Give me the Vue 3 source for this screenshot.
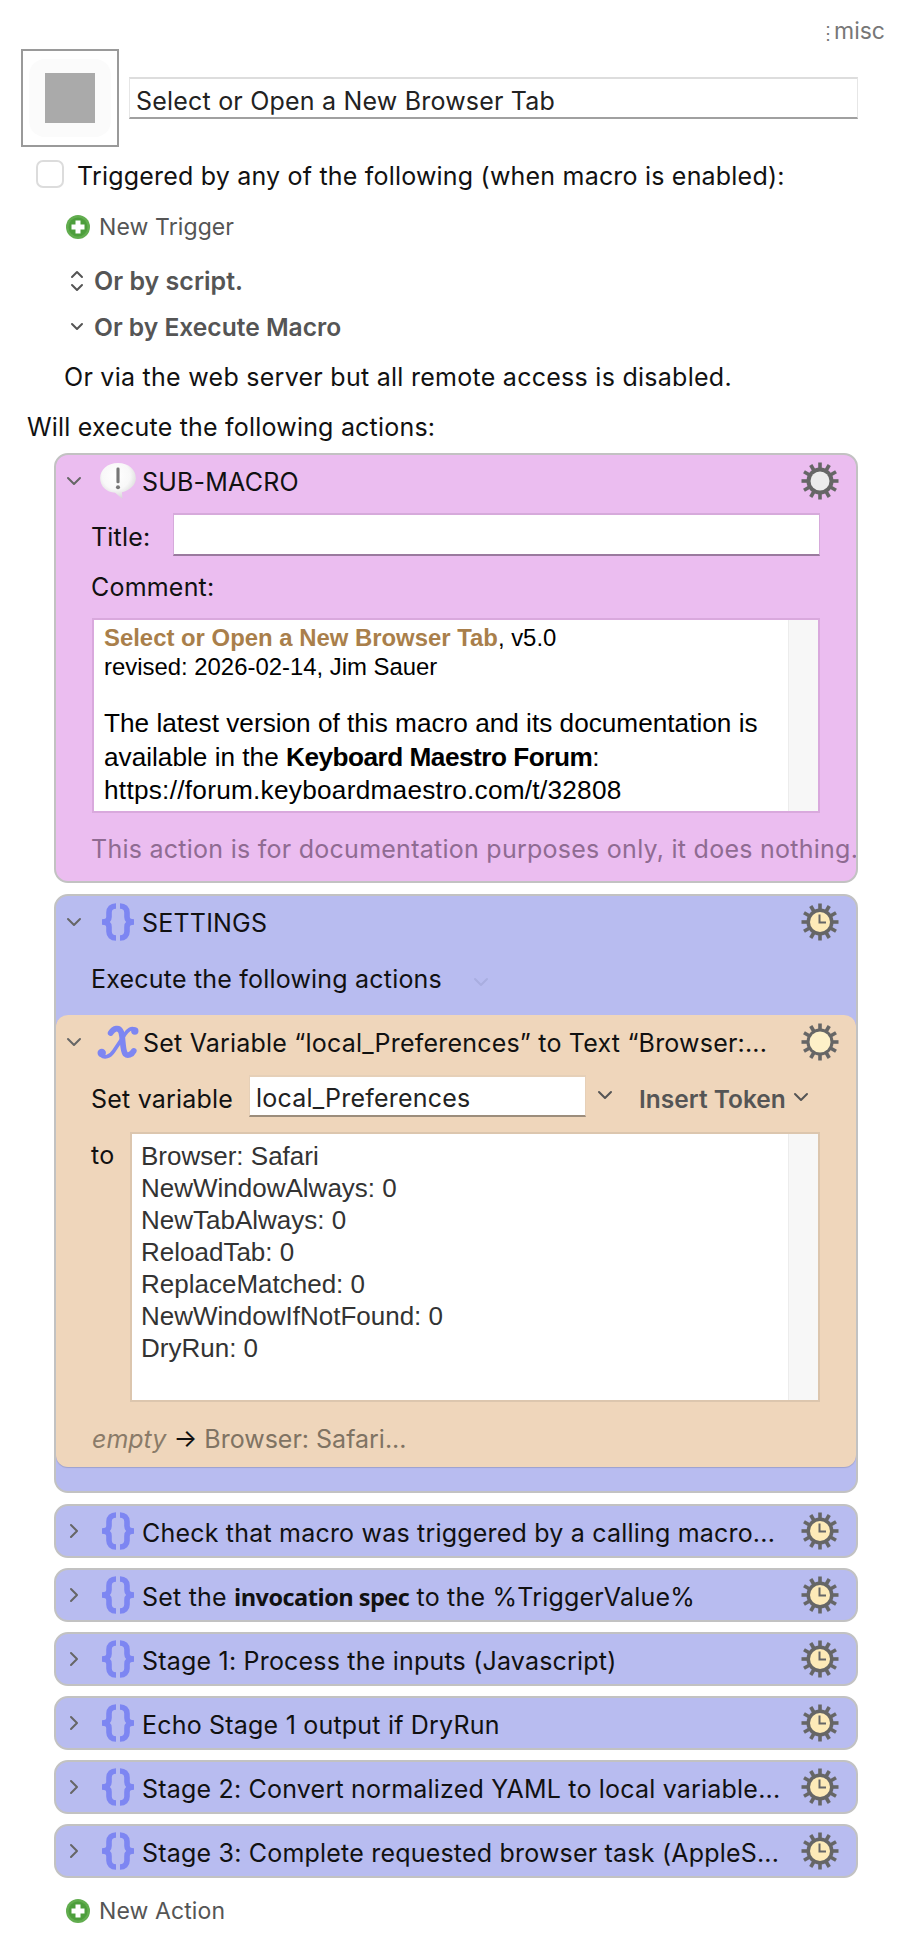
<script setup>
const teeth = Array.from({ length: 12 }, (_, i) => i * 30)
const stages = [
  { id: 1, parts: [{ t: 'Check that macro was triggered by a calling macro...' }] },
  { id: 2, parts: [{ t: 'Set the ' }, { t: 'invocation spec', b: true }, { t: ' to the %TriggerValue%' }] },
  { id: 3, parts: [{ t: 'Stage 1: Process the inputs (Javascript)' }] },
  { id: 4, parts: [{ t: 'Echo Stage 1 output if DryRun' }] },
  { id: 5, parts: [{ t: 'Stage 2: Convert normalized YAML to local variable...' }] },
  { id: 6, parts: [{ t: 'Stage 3: Complete requested browser task (AppleS...' }] }
]
const prefs = ['Browser: Safari', 'NewWindowAlways: 0', 'NewTabAlways: 0', 'ReloadTab: 0', 'ReplaceMatched: 0', 'NewWindowIfNotFound: 0', 'DryRun: 0']
</script>

<template>
  <div class="page">
    <svg class="defs" aria-hidden="true">
      <defs>
        <g id="gear-base">
          <rect v-for="a in teeth" :key="a" x="17.2" y="0.5" width="3.6" height="9" fill="#666" :transform="`rotate(${a} 19 19)`" />
          <circle cx="19" cy="19" r="13.5" fill="#666" />
        </g>
        <symbol id="ic-down" viewBox="0 0 16 10"><path d="M2 2l6 6 6-6" fill="none" stroke="currentColor" stroke-width="2" stroke-linecap="round" stroke-linejoin="round" /></symbol>
        <symbol id="ic-right" viewBox="0 0 10 16"><path d="M2 2l6 6-6 6" fill="none" stroke="currentColor" stroke-width="2" stroke-linecap="round" stroke-linejoin="round" /></symbol>
        <symbol id="ic-brace" viewBox="0 0 34 38">
          <g fill="none" stroke="#7d86f2" stroke-width="5.600">
            <path d="M15 3C10.500 3 8 5.500 8 9.500v4.500C8 17 6 19 1 19c5 0 7 2 7 5v4.500c0 4 2.500 6.500 7 6.500" />
            <path d="M19 3c4.500 0 7 2.500 7 6.500v4.500c0 3 2 5 7 5-5 0-7 2-7 5v4.500c0 4-2.500 6.500-7 6.500" />
          </g>
        </symbol>
        <symbol id="ic-plus" viewBox="0 0 24 24">
          <circle cx="12" cy="12" r="12" fill="#62ad4f" />
          <circle cx="12" cy="12" r="9.500" fill="#4d9e3c" />
          <path d="M12 5.500v13M5.500 12h13" stroke="#fff" stroke-width="5" />
        </symbol>
      </defs>
    </svg>

    <div class="misc"><span class="dots">⋮</span>misc</div>

    <div class="title-row">
      <div class="iconbox"><div class="iconbox-inner"><div class="iconbox-square"></div></div></div>
      <div class="name-field">Select or Open a New Browser Tab</div>
    </div>

    <div class="trigger-row">
      <span class="checkbox"></span>
      <span class="trigger-text">Triggered by any of the following (when macro is enabled):</span>
    </div>

    <div class="new-row new-trigger">
      <svg class="plus"><use href="#ic-plus" /></svg>
      <span>New Trigger</span>
    </div>

    <div class="or-row or-script">
      <svg class="updown" viewBox="0 0 14 24"><path d="M2 8l5-5 5 5M2 16l5 5 5-5" fill="none" stroke="currentColor" stroke-width="2" stroke-linecap="round" stroke-linejoin="round" /></svg>
      <span>Or by script.</span>
    </div>
    <div class="or-row or-exec">
      <svg class="updown down" viewBox="0 0 14 10"><path d="M2 2l5 5 5-5" fill="none" stroke="currentColor" stroke-width="2" stroke-linecap="round" stroke-linejoin="round" /></svg>
      <span>Or by Execute Macro</span>
    </div>

    <div class="plain via">Or via the web server but all remote access is disabled.</div>
    <div class="plain will">Will execute the following actions:</div>

    <section class="card pink">
      <header class="head">
        <svg class="chev"><use href="#ic-down" /></svg>
        <svg class="act act-bubble" viewBox="0 0 34 32">
          <defs>
            <radialGradient id="bub" cx="45%" cy="35%" r="70%"><stop offset="0" stop-color="#ffffff" /><stop offset="0.55" stop-color="#f8f8f8" /><stop offset="1" stop-color="#cfcfcf" /></radialGradient>
          </defs>
          <path d="M17 0C7.500 0 1 6 1 13.500c0 7 5.500 12.500 13.500 13l6.500 5.500-.5-6c7-1.500 12.500-6.500 12.500-12.500C33 6 26.500 0 17 0z" fill="url(#bub)" />
          <rect x="15.600" y="4" width="2.800" height="14" rx="1.200" fill="#777" />
          <circle cx="17" cy="21.500" r="1.800" fill="#777" />
        </svg>
        <span class="head-title">SUB-MACRO</span>
        <svg class="gear" viewBox="0 0 38 38"><use href="#gear-base" /><circle cx="19" cy="19" r="9.500" fill="#ececec" /></svg>
      </header>

      <div class="field-row">
        <span class="title-label">Title:</span>
        <div class="title-input"></div>
      </div>
      <div class="comment-label">Comment:</div>
      <div class="textbox comment-box">
        <div class="comment-text">
          <div class="l-small"><b class="brown">Select or Open a New Browser Tab</b>, v5.0</div>
          <div class="l-small">revised: 2026-02-14, Jim Sauer</div>
          <div class="l-gap"></div>
          <div class="l-big">The latest version of this macro and its documentation is</div>
          <div class="l-big">available in the <b class="forum">Keyboard Maestro Forum</b>:</div>
          <div class="l-big l-last">https://forum.keyboardmaestro.com/t/32808</div>
        </div>
        <div class="scroll"></div>
      </div>
      <div class="foot pink-foot">This action is for documentation purposes only, it does nothing.</div>
    </section>

    <section class="card blue settings">
      <header class="head">
        <svg class="chev"><use href="#ic-down" /></svg>
        <svg class="act"><use href="#ic-brace" /></svg>
        <span class="head-title">SETTINGS</span>
        <svg class="gear" viewBox="0 0 38 38">
          <use href="#gear-base" /><circle cx="19" cy="19" r="10" fill="#fdeab8" />
          <path d="M18.500 11.500V19.500H25" fill="none" stroke="#666" stroke-width="2" />
        </svg>
      </header>
      <div class="exec-row">
        <span>Execute the following actions</span>
        <svg class="faint" viewBox="0 0 16 10"><path d="M2 2l6 6 6-6" fill="none" stroke="currentColor" stroke-width="2" stroke-linecap="round" stroke-linejoin="round" /></svg>
      </div>

      <section class="inner">
        <header class="head inner-head">
          <svg class="chev"><use href="#ic-down" /></svg>
          <svg class="act act-x" viewBox="0 0 40 32">
            <g fill="none" stroke="#7d86f2" stroke-linecap="round">
              <path d="M13 7C16 2 21 1 23 6c2 6 1 17 4 21 2 2 6 1 8-3" stroke-width="5.500" />
              <path d="M37 4C33 1 29 4 26 9L16 24c-4 6-9 7-12 4" stroke-width="3.500" />
            </g>
            <circle cx="36" cy="5" r="3.500" fill="#7d86f2" />
            <circle cx="4.500" cy="26" r="4" fill="#7d86f2" />
          </svg>
          <span class="head-title">Set Variable “local_Preferences” to Text “Browser:...</span>
          <svg class="gear" viewBox="0 0 38 38"><use href="#gear-base" /><circle cx="19" cy="19" r="10.500" fill="#fdf0c8" /></svg>
        </header>

        <div class="var-row">
          <span class="var-label">Set variable</span>
          <div class="var-input">local_Preferences</div>
          <svg class="var-chev"><use href="#ic-down" /></svg>
          <span class="token">Insert Token</span>
          <svg class="token-chev"><use href="#ic-down" /></svg>
        </div>

        <div class="to-row">
          <span class="to">to</span>
          <div class="textbox to-box">
            <div class="prefs">
              <div v-for="p in prefs" :key="p">{{ p }}</div>
            </div>
            <div class="scroll"></div>
          </div>
        </div>

        <div class="foot tan-foot"><i>empty</i> <span class="arrow">→</span> Browser: Safari...</div>
      </section>
    </section>

    <section v-for="s in stages" :key="s.id" class="card blue mini">
      <header class="head mini-head">
        <svg class="chev-r"><use href="#ic-right" /></svg>
        <svg class="act"><use href="#ic-brace" /></svg>
        <span class="head-title">
          <template v-for="(p, i) in s.parts" :key="i"><b v-if="p.b" class="spec">{{ p.t }}</b><template v-else>{{ p.t }}</template></template>
        </span>
        <svg class="gear" viewBox="0 0 38 38">
          <use href="#gear-base" /><circle cx="19" cy="19" r="10" fill="#fdeab8" />
          <path d="M18.500 11.500V19.500H25" fill="none" stroke="#666" stroke-width="2" />
        </svg>
      </header>
    </section>

    <div class="new-row new-action">
      <svg class="plus"><use href="#ic-plus" /></svg>
      <span>New Action</span>
    </div>
  </div>
</template>

<style>
html, body { background: #fff; }
</style>

<style scoped>
.page {
  width: 904px;
  height: 1944px;
  overflow: hidden;
  box-sizing: border-box;
  background: #fff;
  color: #111;
  font-family: Inter, "Liberation Sans", sans-serif;
  font-size: 25px;
  letter-spacing: 0.2px;
  line-height: 28px;
  position: relative;
}
.defs { position: absolute; width: 0; height: 0; }

.misc {
  height: 49px;
  padding: 17px 19px 0 0;
  box-sizing: border-box;
  text-align: right;
  color: #777;
  font-size: 23px;
  letter-spacing: 0;
}
.dots { font-size: 18px; margin-right: -3px; }

.title-row { display: flex; padding-left: 21px; gap: 10px; height: 98px; }
.iconbox {
  width: 98px;
  height: 98px;
  box-sizing: border-box;
  border: 2px solid #9a9a9a;
  padding: 8px 6px;
}
.iconbox-inner {
  height: 100%;
  border-radius: 16px;
  background: #fbfbfb;
  display: flex;
  align-items: center;
  justify-content: center;
}
.iconbox-square { width: 50px; height: 50px; background: #aaa; }
.name-field {
  width: 729px;
  height: 42px;
  margin-top: 28px;
  box-sizing: border-box;
  border-top: 2px solid #ddd;
  border-left: 1px solid #e6e6e6;
  border-right: 1px solid #e6e6e6;
  border-bottom: 2px solid #a0a0a0;
  padding: 8px 0 0 6px;
  color: #222;
}

.trigger-row {
  display: flex;
  align-items: center;
  gap: 13px;
  margin-top: 13px;
  padding-left: 36px;
  height: 28px;
}
.trigger-text { padding-top: 3px; }
.checkbox {
  width: 28px;
  height: 28px;
  box-sizing: border-box;
  border: 2px solid #dcdcdc;
  border-radius: 7px;
  background: #fff;
}

.new-row { display: flex; align-items: center; gap: 9px; height: 24px; color: #555; font-size: 23px; letter-spacing: 0.1px; padding-left: 66px; }
.new-trigger { margin-top: 27px; }
.plus { width: 24px; height: 24px; }

.or-row { display: flex; align-items: center; height: 28px; color: #555; font-weight: 600; font-size: 25px; letter-spacing: 0; }
.or-script { margin-top: 28px; padding-left: 70px; gap: 10px; }
.or-exec { margin-top: 18px; padding-left: 70px; gap: 10px; }
.or-exec span { font-size: 24.6px; }
.updown { width: 14px; height: 24px; }
.updown.down { height: 10px; }

.plain { height: 28px; }
.via { margin-top: 22px; padding-left: 64px; letter-spacing: 0.27px; }
.will { margin-top: 22px; padding-left: 27px; }

.card {
  width: 804px;
  margin-left: 54px;
  box-sizing: border-box;
  border: 2px solid #c2c2c2;
  border-radius: 14px;
  overflow: hidden;
}
.pink { background: #ebbdf0; margin-top: 12px; height: 430px; }
.blue { background: #b8bcf0; }
.settings { margin-top: 11px; height: 599px; }
.mini { margin-top: 10px; height: 54px; }
.settings + .mini { margin-top: 11px; }

.head { display: flex; align-items: center; height: 52px; padding: 0 17px 0 10px; }
.mini-head { height: 50px; }
.inner-head { height: 54px; }
.chev { width: 16px; height: 10px; color: #666; flex: none; }
.chev-r { width: 10px; height: 16px; color: #666; flex: none; margin: 0 3px; }
.act { width: 34px; height: 38px; margin-left: 19px; flex: none; }
.act-bubble { width: 38px; height: 36px; margin-left: 17px; margin-right: -2px; }
.act-x { width: 42px; height: 35px; margin-left: 15px; }
.inner-head .head-title { margin-left: 4px; }
.head-title { margin-left: 7px; padding-top: 1px; white-space: nowrap; flex: 1; min-width: 0; }
.mini-head .head-title { padding-top: 3px; }
.spec { font-weight: 700; font-family: "Open Sans", sans-serif; font-size: 23.5px; letter-spacing: -0.5px; }
.gear { width: 38px; height: 38px; flex: none; }

.field-row { display: flex; align-items: center; margin-top: 6px; padding-left: 35px; }
.title-label { width: 82px; padding-top: 4px; }
.title-input {
  width: 647px;
  height: 43px;
  box-sizing: border-box;
  background: #fff;
  border-top: 2px solid #d6aadb;
  border-left: 1px solid #d6aadb;
  border-right: 1px solid #d6aadb;
  border-bottom: 2px solid #9a7a9e;
}
.comment-label { margin-top: 17px; padding-left: 35px; }

.textbox { display: flex; box-sizing: border-box; background: #fff; border: 2px solid #d9a9dd; letter-spacing: 0; }
.comment-box { margin: 17px 0 0 36px; width: 728px; height: 195px; }
.comment-text { flex: 1; padding: 3px 0 0 10px; font-family: "Liberation Sans", sans-serif; color: #000; white-space: nowrap; }
.scroll { width: 29px; flex: none; background: #f7f7f7; border-left: 1px solid #ececec; }
.l-small { font-size: 23.9px; line-height: 29px; }
.l-gap { height: 25px; }
.l-big { font-size: 26.2px; line-height: 34px; }
.l-last { line-height: 32px; letter-spacing: 0.27px; }
.forum { letter-spacing: -0.5px; }
.brown { color: #a97f4b; }

.foot { height: 28px; white-space: nowrap; }
.pink-foot { margin-top: 22px; padding-left: 35px; color: #8f6b92; letter-spacing: 0.26px; }

.exec-row { display: flex; align-items: center; margin-top: 17px; height: 28px; padding-left: 35px; }
.faint { width: 16px; height: 10px; color: #a9aee0; margin: 6px 0 0 31px; }

.inner { margin-top: 22px; height: 452px; background: #efd6bb; border-radius: 12px; box-shadow: 0 1px 1px rgba(0,0,0,.15); }

.var-row { display: flex; align-items: center; margin-top: 6px; padding-left: 35px; height: 42px; }
.var-label { width: 158px; white-space: nowrap; padding-top: 5px; }
.var-input {
  width: 337px;
  height: 42px;
  box-sizing: border-box;
  background: #fff;
  border-top: 2px solid #e6d0b8;
  border-left: 1px solid #e6d0b8;
  border-right: 1px solid #e6d0b8;
  border-bottom: 2px solid #9c8d7c;
  padding: 7px 0 0 6px;
  color: #222;
}
.var-chev { width: 16px; height: 10px; color: #555; margin-left: 11px; margin-top: -2px; }
.token { margin-left: 26px; padding-top: 5px; font-weight: 600; color: #555; font-size: 24.5px; letter-spacing: 0; white-space: nowrap; }
.token-chev { width: 16px; height: 10px; color: #555; margin-left: 7px; margin-top: 2px; }

.to-row { display: flex; margin-top: 15px; padding-left: 35px; }
.to { width: 39px; margin-top: 9px; }
.to-box { width: 690px; height: 270px; border-color: #dcc6ae; }
.prefs { flex: 1; padding: 6px 0 0 9px; line-height: 32px; color: #333; font-family: "Liberation Sans", sans-serif; font-size: 26px; }

.tan-foot { margin-top: 23px; padding-left: 36px; color: #7f7363; letter-spacing: 0; }
.tan-foot i { color: #8a7b69; }
.arrow { color: #111; }

.new-action { margin-top: 21px; }
</style>
